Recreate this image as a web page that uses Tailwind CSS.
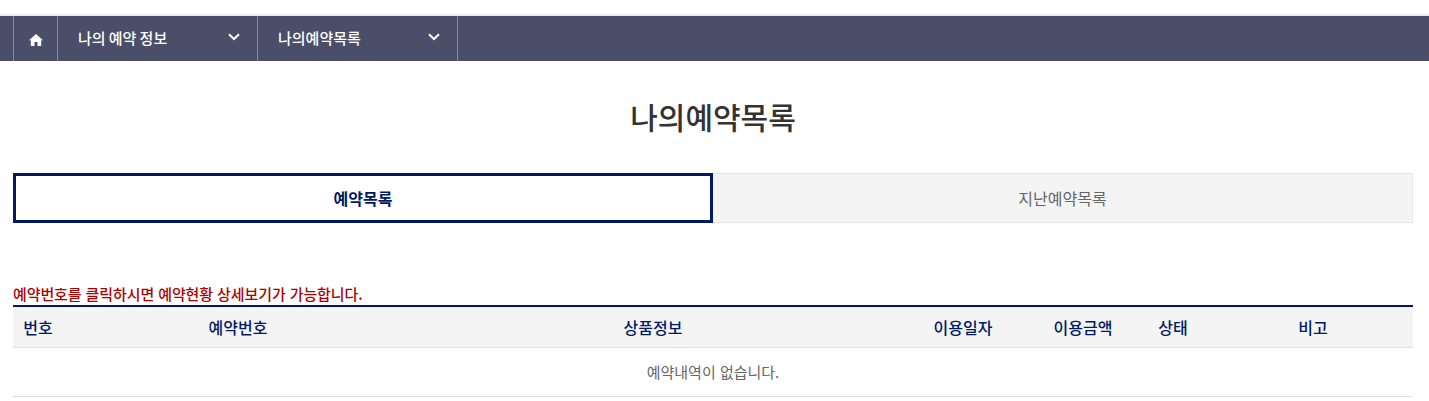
<!DOCTYPE html>
<html lang="ko">
  <head>
    <meta charset="utf-8" />
    <title>나의예약목록</title>
    <script src="https://cdn.jsdelivr.net/npm/@tailwindcss/browser@4"></script>
  </head>
  <body class="bg-white font-['Noto_Sans_CJK_KR','Noto_Sans',sans-serif] overflow-hidden">
    <div class="h-[16px] border-b-2 border-[#ededed]"></div>
    <!-- top nav -->
    <nav class="h-[45px] bg-[#4a4e69] pl-[13px] text-white">
      <ul class="flex h-full border-l border-[#8a8c9e] w-fit">
        <li class="w-[44px] flex items-center justify-center border-r border-[#8a8c9e]">
          <svg class="w-[14px] h-[12px] mt-[2px]" viewBox="0 0 14 12" fill="#fff">
            <path d="M7 0 L14 6.2 L12.2 6.2 L12.2 12 L8.5 12 L8.5 8 L5.5 8 L5.5 12 L1.8 12 L1.8 6.2 L0 6.2 Z" />
          </svg>
        </li>
        <li class="w-[200px] flex items-center justify-between pl-[20px] pr-[17px] border-r border-[#8a8c9e] text-[15px] font-medium">
          <span class="-mt-[1px] [word-spacing:-1px]">나의 예약 정보</span>
          <svg class="w-[12px] h-[8px] -mt-[3px]" viewBox="0 0 12 8" fill="none" stroke="#fff" stroke-width="2">
            <path d="M1 1.2 L6 6 L11 1.2" />
          </svg>
        </li>
        <li class="w-[200px] flex items-center justify-between pl-[20px] pr-[17px] border-r border-[#8a8c9e] text-[15px] font-medium">
          <span class="-mt-[1px]">나의예약목록</span>
          <svg class="w-[12px] h-[8px] -mt-[3px]" viewBox="0 0 12 8" fill="none" stroke="#fff" stroke-width="2">
            <path d="M1 1.2 L6 6 L11 1.2" />
          </svg>
        </li>
      </ul>
    </nav>

    <main class="pl-[13px] pr-[16px]">
      <h1 class="h-[112px] pt-[34px] text-center text-[30px] leading-[42px] font-medium text-[#333]">나의예약목록</h1>

      <!-- tabs -->
      <div class="flex h-[50px]">
        <div class="w-1/2 flex items-center justify-center border-[3px] border-[#001a66] bg-white text-[16px] font-bold text-[#001a66]">예약목록</div>
        <div class="w-1/2 flex items-center justify-center border border-l-0 border-[#e5e5e5] bg-[#f4f4f4] text-[16px] text-[#666]">지난예약목록</div>
      </div>

      <p class="mt-[60px] h-[22px] text-[15px] leading-[21px] font-medium tracking-[-0.1px] text-[#b00000]">예약번호를 클릭하시면 예약현황 상세보기가 가능합니다.</p>

      <!-- list -->
      <table class="w-full table-fixed border-t-2 border-[#001a66]">
        <colgroup>
          <col class="w-[50px]" />
          <col class="w-[350px]" />
          <col class="w-[480px]" />
          <col class="w-[140px]" />
          <col class="w-[100px]" />
          <col class="w-[80px]" />
          <col class="w-[200px]" />
        </colgroup>
        <thead>
          <tr class="h-[41px] bg-[#f4f4f4] border-b border-[#dedede] text-[16px] font-medium text-[#001a66]">
            <th class="font-medium">번호</th>
            <th class="font-medium">예약번호</th>
            <th class="font-medium">상품정보</th>
            <th class="font-medium">이용일자</th>
            <th class="font-medium">이용금액</th>
            <th class="font-medium">상태</th>
            <th class="font-medium">비고</th>
          </tr>
        </thead>
        <tbody>
          <tr class="h-[49px] border-b border-[#dedede]">
            <td colspan="7" class="pt-[1px] text-center text-[15px] text-[#666]">예약내역이 없습니다.</td>
          </tr>
        </tbody>
      </table>
    </main>
  </body>
</html>
